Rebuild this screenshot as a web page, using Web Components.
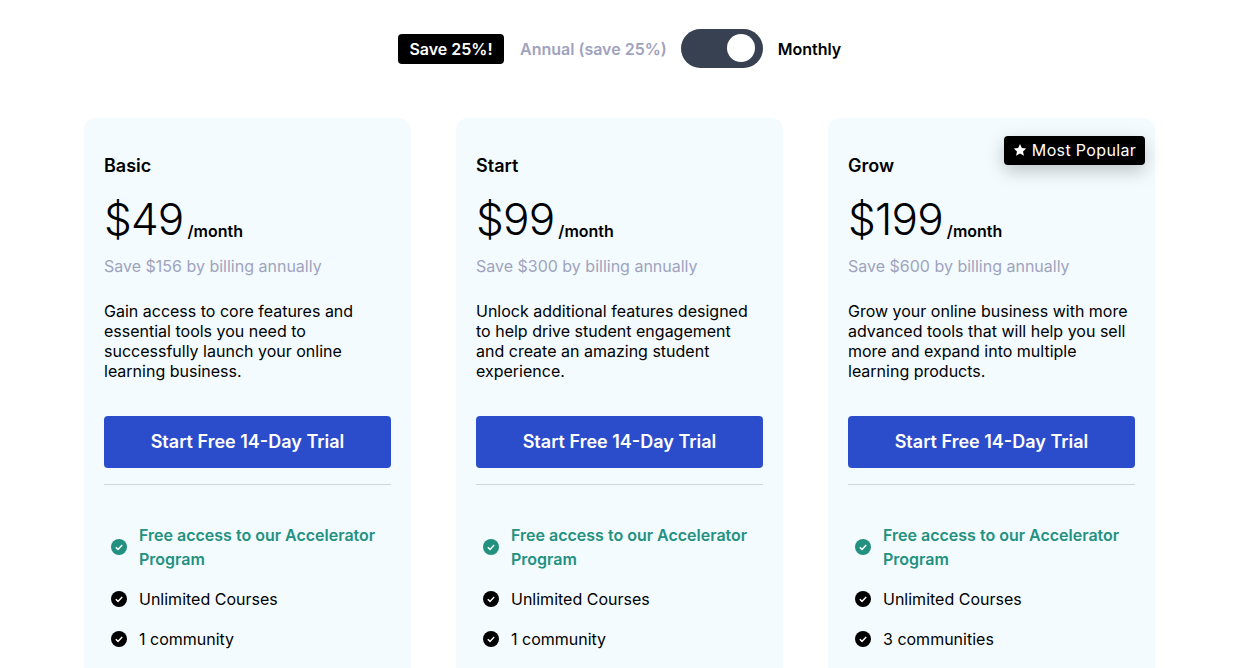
<!DOCTYPE html>
<html>
<head>
<meta charset="utf-8">
<style>
  html, body { margin: 0; height: 100%; overflow: hidden; background: #fff; }
  body { font-family: Inter, "Liberation Sans", sans-serif; color: #000; }
</style>
</head>
<body>
<pricing-page>
  <billing-toggle></billing-toggle>
  <plan-card name="Basic" price="$49" save="Save $156 by billing annually">
    Gain access to core features and essential tools you need to successfully launch your online learning business.
    <plan-item slot="items" highlight>Free access to our Accelerator Program</plan-item>
    <plan-item slot="items">Unlimited Courses</plan-item>
    <plan-item slot="items">1 community</plan-item>
  </plan-card>
  <plan-card name="Start" price="$99" save="Save $300 by billing annually">
    Unlock additional features designed to help drive student engagement and create an amazing student experience.
    <plan-item slot="items" highlight>Free access to our Accelerator Program</plan-item>
    <plan-item slot="items">Unlimited Courses</plan-item>
    <plan-item slot="items">1 community</plan-item>
  </plan-card>
  <plan-card name="Grow" price="$199" save="Save $600 by billing annually" popular>
    Grow your online business with more advanced tools that will help you sell more and expand into multiple learning products.
    <plan-item slot="items" highlight>Free access to our Accelerator Program</plan-item>
    <plan-item slot="items">Unlimited Courses</plan-item>
    <plan-item slot="items">3 communities</plan-item>
  </plan-card>
</pricing-page>
<script>
class PricingPage extends HTMLElement {
  constructor() {
    super();
    this.attachShadow({ mode: "open" });
    this.shadowRoot.innerHTML = `
      <style>
        :host { display: block; }
        .top { padding-top: 29px; height: 89px; }
        .cards {
          display: grid;
          grid-template-columns: repeat(3, 327px);
          column-gap: 45px;
          padding-left: 84px;
        }
      </style>
      <div class="top"><slot name="top"></slot></div>
      <div class="cards"><slot></slot></div>
    `;
  }
  connectedCallback() {
    const t = this.querySelector("billing-toggle");
    if (t) t.slot = "top";
  }
}

class BillingToggle extends HTMLElement {
  constructor() {
    super();
    this.attachShadow({ mode: "open" });
    this.shadowRoot.innerHTML = `
      <style>
        :host { display: flex; align-items: center; height: 39px; padding-left: 398px; font-size: 16px; font-weight: 600; line-height: 24px; }
        .save { background: #000; color: #fff; border-radius: 4px; height: 30px; line-height: 30px; width: 106px; text-align: center; }
        .annual { color: #a0a3bd; margin-left: 16px; }
        .switch { width: 82px; height: 39px; border-radius: 20px; background: #374151; margin-left: 14px; position: relative; }
        .knob { position: absolute; top: 5px; right: 8px; width: 28px; height: 28px; border-radius: 50%; background: #fff; }
        .monthly { margin-left: 15px; }
      </style>
      <span class="save">Save 25%!</span>
      <span class="annual">Annual (save 25%)</span>
      <span class="switch"><span class="knob"></span></span>
      <span class="monthly">Monthly</span>
    `;
  }
}

class PlanCard extends HTMLElement {
  constructor() {
    super();
    this.attachShadow({ mode: "open" });
    this.shadowRoot.innerHTML = `
      <style>
        :host { display: block; position: relative; background: #f3fbff; border-radius: 12px; padding: 36px 20px 40px; height: 600px; }
        .name { font-size: 18px; font-weight: 600; line-height: 24px; }
        .price { display: flex; align-items: baseline; margin-top: 11px; height: 60px; }
        .amount { font-size: 44px; font-weight: 300; line-height: 60px; letter-spacing: -.8px; }
        .per { font-size: 16px; font-weight: 600; margin-left: 4px; transform: translateY(2px); }
        .save { font-size: 16px; color: #a0a3bd; line-height: 24px; margin-top: 5px; }
        .desc { font-size: 16px; line-height: 20px; margin-top: 23px; height: 80px; }
        button { display: block; width: 100%; height: 52px; margin-top: 35px; padding: 0 0 2px; border: 0; border-radius: 4px; background: #2b4dcb; color: #fff; font: 600 18px Inter, sans-serif; }
        hr { border: 0; border-top: 1px solid #d1d5db; margin: 16px 0 0; }
        .items { margin-top: 38px; display: flex; flex-direction: column; gap: 16px; }
        .badge { position: absolute; top: 18px; right: 10px; height: 29px; width: 141px; box-sizing: border-box; padding-bottom: 1px; background: #000; color: #fff; border-radius: 4px; display: none; align-items: center; justify-content: center; gap: 5px; font: 400 16px Inter, sans-serif; letter-spacing: .35px; box-shadow: 0 6px 18px rgba(0,0,0,.22); }
        :host([popular]) .badge { display: flex; }
      </style>
      <div class="badge">
        <svg width="14" height="14" viewBox="0 0 24 24" fill="#fff"><path d="M12 1.6l3.2 6.9 7.5.9-5.5 5.1 1.5 7.4L12 18.2l-6.7 3.7 1.5-7.4L1.3 9.4l7.5-.9z"/></svg>
        <span>Most Popular</span>
      </div>
      <div class="name"></div>
      <div class="price"><span class="amount"></span><span class="per">/month</span></div>
      <div class="save"></div>
      <div class="desc"><slot></slot></div>
      <button>Start Free 14-Day Trial</button>
      <hr>
      <div class="items"><slot name="items"></slot></div>
    `;
  }
  connectedCallback() {
    const s = this.shadowRoot;
    s.querySelector(".name").textContent = this.getAttribute("name");
    s.querySelector(".amount").textContent = this.getAttribute("price");
    s.querySelector(".save").textContent = this.getAttribute("save");
  }
}

class PlanItem extends HTMLElement {
  constructor() {
    super();
    this.attachShadow({ mode: "open" });
    this.shadowRoot.innerHTML = `
      <style>
        :host { display: flex; align-items: center; gap: 12px; padding-left: 7px; font-size: 16px; line-height: 24px; color: #000; }
        :host([highlight]) { color: #23917f; font-weight: 600; }
        svg { flex: none; width: 16px; height: 16px; }
      </style>
      <svg viewBox="0 0 16 16"><circle cx="8" cy="8" r="8" fill="currentColor"/><path d="M4.8 8.3l2.2 2.1 4.2-4.3" fill="none" stroke="#fff" stroke-width="1.5"/></svg>
      <span><slot></slot></span>
    `;
  }
}

customElements.define("pricing-page", PricingPage);
customElements.define("billing-toggle", BillingToggle);
customElements.define("plan-card", PlanCard);
customElements.define("plan-item", PlanItem);
</script>
</body>
</html>
